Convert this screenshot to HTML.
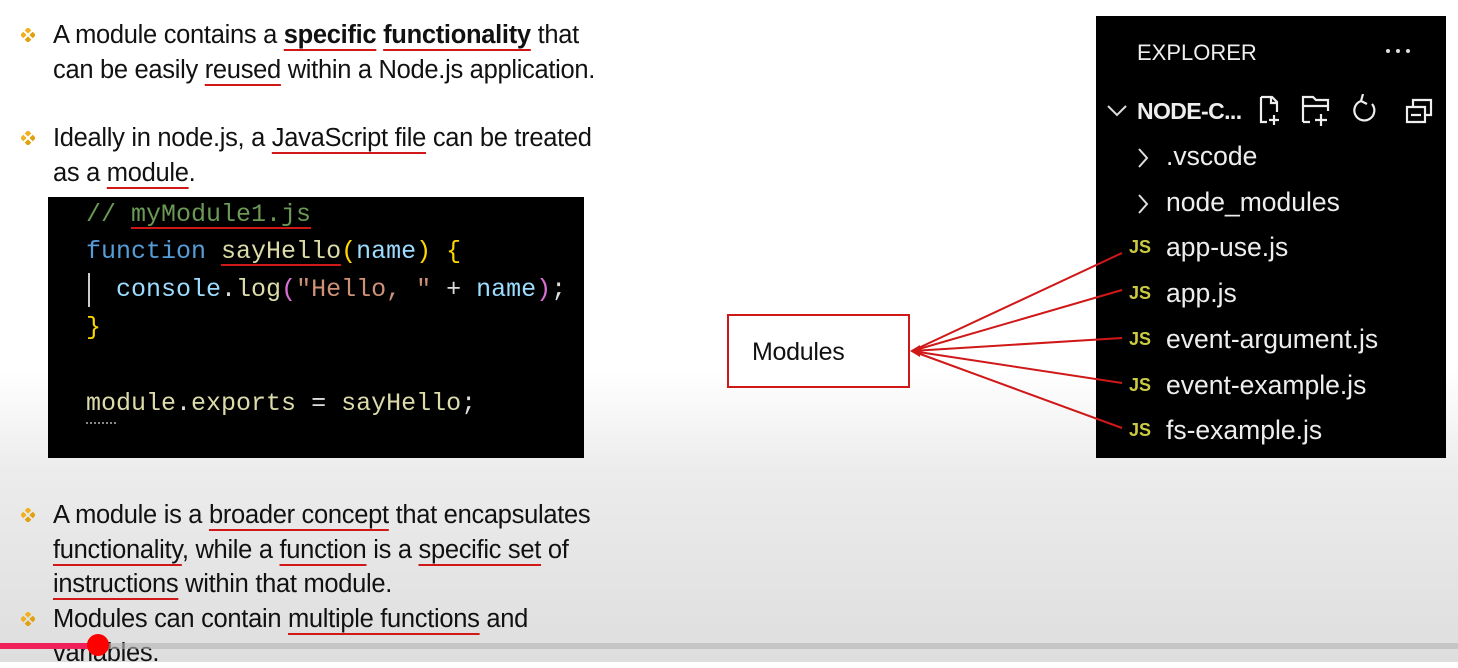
<!DOCTYPE html>
<html><head><meta charset="utf-8">
<style>
body{margin:0;width:1458px;height:662px;overflow:hidden;position:relative;font-family:"Liberation Sans",sans-serif;
background:linear-gradient(#fff 0,#fff 370px,#ececec 470px,#dedede 662px);}
.t{position:absolute;font-size:25.5px;color:#111;white-space:nowrap;letter-spacing:-0.3px}
.b{position:absolute;width:14px;height:14px}
u{text-decoration:underline;text-decoration-color:#d01818;text-decoration-thickness:2px;text-underline-offset:6px}
.code{position:absolute;left:48px;top:197px;width:536px;height:261px;background:#000}
.cl{position:absolute;font-family:"Liberation Mono",monospace;font-size:25px;white-space:nowrap}
.exp{position:absolute;left:1096px;top:16px;width:350px;height:442px;background:#000;color:#eee}
.f{position:absolute;font-size:26.5px;white-space:nowrap;color:#eee;letter-spacing:0px}
.js{position:absolute;font-size:18px;font-weight:bold;color:#cbcb41;left:33px}
</style></head><body>
<svg width="0" height="0" style="position:absolute"><defs><g id="dia"><rect x="5" y="0" width="5" height="5" fill="#f0b020" transform="rotate(45 7.5 2.5)"/><rect x="0" y="5" width="5" height="5" fill="#f0b020" transform="rotate(45 2.5 7.5)"/><rect x="10" y="5" width="5" height="5" fill="#e0a010" transform="rotate(45 12.5 7.5)"/><rect x="5" y="10" width="5" height="5" fill="#e0a010" transform="rotate(45 7.5 12.5)"/></g></defs></svg>

<svg class="b" style="left:21px;top:28px" viewBox="0 0 15 15"><use href="#dia"/></svg>
<div class="t" style="left:53px;top:21px">A module contains a <b><u>specific</u> <u>functionality</u></b> that</div>
<div class="t" style="left:53px;top:56px">can be easily <u>reused</u> within a Node.js application.</div>

<svg class="b" style="left:21px;top:131px" viewBox="0 0 15 15"><use href="#dia"/></svg>
<div class="t" style="left:53px;top:124px">Ideally in node.js, a <u>JavaScript file</u> can be treated</div>
<div class="t" style="left:53px;top:159px">as a <u>module</u>.</div>

<div class="code">
<div class="cl" style="left:38px;top:3px;color:#6a9955">// <u>myModule1.js</u></div>
<div class="cl" style="left:38px;top:40px"><span style="color:#569cd6">function</span> <u style="color:#dcdcaa">sayHello</u><span style="color:#ffd700">(</span><span style="color:#9cdcfe">name</span><span style="color:#ffd700">)</span> <span style="color:#ffd700">{</span></div>
<div style="position:absolute;left:40px;top:76px;width:2px;height:34px;background:#ccc"></div>
<div class="cl" style="left:68px;top:78px"><span style="color:#9cdcfe">console</span><span style="color:#ddd">.</span><span style="color:#dcdcaa">log</span><span style="color:#da70d6">(</span><span style="color:#ce9178">"Hello, "</span><span style="color:#ddd"> + </span><span style="color:#9cdcfe">name</span><span style="color:#da70d6">)</span><span style="color:#ddd">;</span></div>
<div class="cl" style="left:38px;top:116px;color:#ffd700">}</div>
<div class="cl" style="left:38px;top:192px;color:#dcdcaa">module<span style="color:#ddd">.</span>exports <span style="color:#ddd">=</span> sayHello<span style="color:#ddd">;</span></div>
<div style="position:absolute;left:38px;top:225px;width:30px;border-top:2px dotted #888"></div>
</div>

<svg class="b" style="left:21px;top:508px" viewBox="0 0 15 15"><use href="#dia"/></svg>
<div class="t" style="left:53px;top:501px">A module is a <u>broader concept</u> that encapsulates</div>
<div class="t" style="left:53px;top:536px"><u>functionality</u>, while a <u>function</u> is a <u>specific set</u> of</div>
<div class="t" style="left:53px;top:570px"><u>instructions</u> within that module.</div>
<svg class="b" style="left:21px;top:612px" viewBox="0 0 15 15"><use href="#dia"/></svg>
<div class="t" style="left:53px;top:605px">Modules can contain <u>multiple functions</u> and</div>
<div class="t" style="left:53px;top:639px">variables.</div>

<div style="position:absolute;left:0;top:643px;width:1458px;height:6px;background:rgba(180,180,180,0.6)"></div>
<div style="position:absolute;left:0;top:643px;width:98px;height:6px;background:#f0205a"></div>
<div style="position:absolute;left:87px;top:634px;width:22px;height:22px;border-radius:50%;background:#f00"></div>

<div style="position:absolute;left:727px;top:314px;width:179px;height:70px;border:2px solid #d01818;background:#fff"></div>
<div class="t" style="left:752px;top:338px;font-size:25px">Modules</div>

<div class="exp">
<div class="f" style="left:41px;top:24px;font-size:22px">EXPLORER</div>
<div style="position:absolute;left:290px;top:33px;width:4px;height:4px;border-radius:50%;background:#ddd;box-shadow:10px 0 #ddd,20px 0 #ddd"></div>
<svg style="position:absolute;left:10px;top:88px" width="22" height="14"><path d="M2 2 L11 11 L20 2" stroke="#ddd" stroke-width="2" fill="none"/></svg>
<div class="f" style="left:41px;top:82px;font-weight:bold;font-size:23px;letter-spacing:-0.6px">NODE-C...</div>
<svg style="position:absolute;left:155px;top:78px" width="190" height="34" fill="none" stroke="#eee" stroke-width="2.2">
<path d="M10 3 H21 L26 8 V18 M10 3 V28 H16 M26 9 H20 V3 M23 21 V31 M18 26 H28"/>
<path d="M52 28 V3 H62 L65 6 H77 V17 M52 12 H77 M52 28 H59 M70 20 V32 M64 26 H76"/>
<path d="M121 10 A10 10 0 1 1 110 7 M110 7 L112 0 M110 7 L116 10"/>
<path d="M156 13 H174 V28 H156 Z M162 13 V6 H180 V21 H174 M160 21 H170"/>
</svg>
<svg style="position:absolute;left:40px;top:131px" width="14" height="22"><path d="M3 2 L11 11 L3 20" stroke="#ddd" stroke-width="2" fill="none"/></svg>
<div class="f" style="left:70px;top:125px">.vscode</div>
<svg style="position:absolute;left:40px;top:177px" width="14" height="22"><path d="M3 2 L11 11 L3 20" stroke="#ddd" stroke-width="2" fill="none"/></svg>
<div class="f" style="left:70px;top:171px">node_modules</div>
<div class="js" style="top:221px">JS</div><div class="f" style="left:70px;top:216px">app-use.js</div>
<div class="js" style="top:267px">JS</div><div class="f" style="left:70px;top:262px">app.js</div>
<div class="js" style="top:313px">JS</div><div class="f" style="left:70px;top:308px">event-argument.js</div>
<div class="js" style="top:359px">JS</div><div class="f" style="left:70px;top:354px">event-example.js</div>
<div class="js" style="top:404px">JS</div><div class="f" style="left:70px;top:399px">fs-example.js</div>
</div>
<svg style="position:absolute;left:0;top:0" width="1458" height="662">
<g stroke="#d01818" stroke-width="2" fill="none">
<line x1="912" y1="351" x2="1122" y2="253"/>
<line x1="912" y1="351" x2="1122" y2="290"/>
<line x1="912" y1="351" x2="1122" y2="338"/>
<line x1="912" y1="351" x2="1122" y2="383"/>
<line x1="912" y1="351" x2="1122" y2="428"/>
</g>
<polygon points="910,351 920,345 920,357" fill="#d01818"/>
</svg>
</body></html>
